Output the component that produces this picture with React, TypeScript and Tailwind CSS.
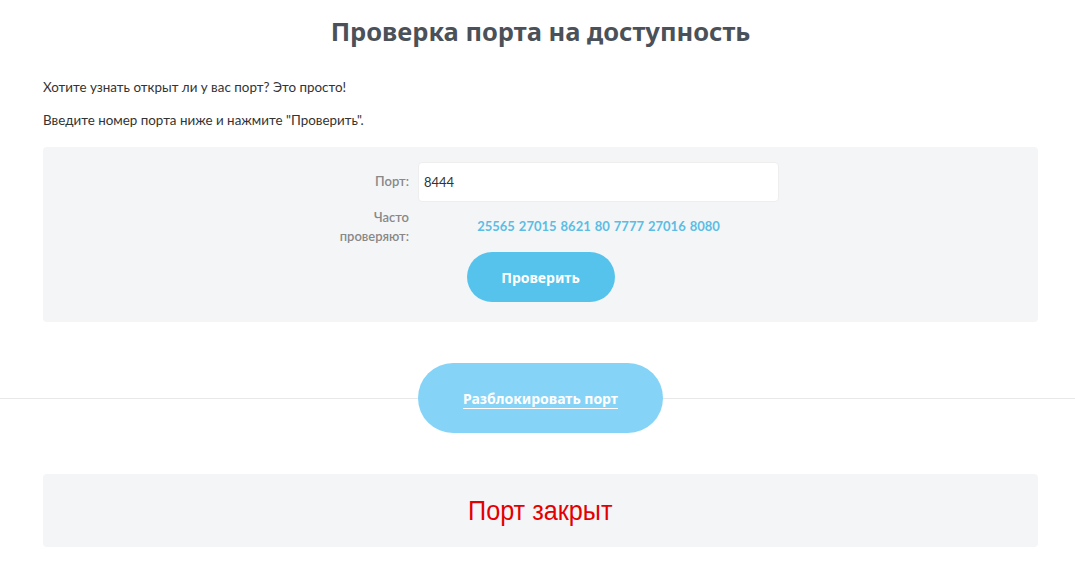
import React from 'react';

const ports = ['25565', '27015', '8621', '80', '7777', '27016', '8080'];

const App: React.FC = () => {
  return (
    <div className="min-h-[572px] bg-white font-['Lato','Open_Sans',sans-serif] text-[#333]">
      <div className="pl-[43px] pr-[37px]">
        <h1 className="pt-[13px] text-center font-['Noto_Sans',sans-serif] text-[25.5px] font-bold leading-[36px] text-[#4b5159]">
          Проверка порта на доступность
        </h1>
        <p className="mt-[30px] text-[13.4px] leading-[16px]">Хотите узнать открыт ли у вас порт? Это просто!</p>
        <p className="mt-[17px] text-[13.4px] leading-[16px]">Введите номер порта ниже и нажмите "Проверить".</p>

        <div className="mt-[19px] rounded bg-[#f4f5f7] pt-[15px] pb-[20px]">
          <div className="grid grid-cols-[366px_361px] gap-x-[9px]">
            <label className="flex items-center justify-end text-[13px] font-semibold text-[#888]">Порт:</label>
            <input
              className="h-[40px] rounded-sm border border-[#eee] bg-white px-[5px] text-[13px] text-[#333] outline-none"
              defaultValue="8444"
            />
            <div className="mt-[6px] text-right text-[13px] font-semibold leading-[19px] text-[#888]">
              Часто
              <br />
              проверяют:
            </div>
            <div className="mt-[6px] flex items-center justify-center gap-[4px] text-[13px] font-bold text-[#5bbde4]">
              {ports.map((p) => (
                <a key={p} href="#">
                  {p}
                </a>
              ))}
            </div>
          </div>
          <div className="mt-[6px] flex justify-center">
            <button className="h-[50px] w-[148px] rounded-full bg-[#55c3ec] font-['Noto_Sans',sans-serif] text-[14px] font-bold text-white">
              Проверить
            </button>
          </div>
        </div>
      </div>

      <div className="relative mt-[41px] flex h-[70px] items-center justify-center">
        <div className="absolute inset-x-0 top-1/2 h-px bg-[#e8e8e8]" />
        <button className="relative ml-[6px] h-[70px] w-[245px] rounded-full bg-[#85d4f7] font-['Noto_Sans',sans-serif] text-[14px] font-bold text-white underline underline-offset-4">
          Разблокировать порт
        </button>
      </div>

      <div className="pl-[43px] pr-[37px]">
        <div className="mt-[41px] flex h-[73px] items-center justify-center rounded bg-[#f4f5f7]">
          <span className="inline-block scale-x-[0.9] font-['Liberation_Sans',sans-serif] text-[28px] text-[#e30000]">
            Порт закрыт
          </span>
        </div>
      </div>
    </div>
  );
};

export default App;
